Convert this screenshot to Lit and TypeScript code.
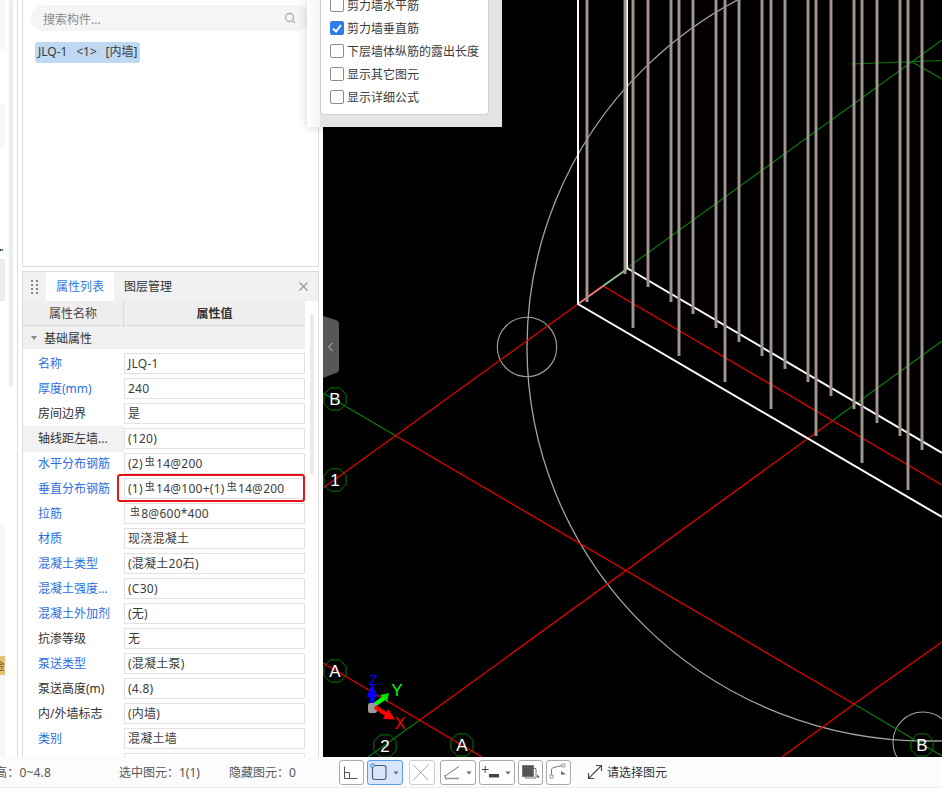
import { LitElement, html, css, svg } from "lit";
import { customElement } from "lit/decorators.js";

const BARS: [number, number][] = [
  [587, 302], [625, 274], [633, 328], [648, 287], [671, 302], [679, 356], [693, 314], [716, 328],
  [725, 382], [739, 342], [762, 356], [771, 409], [785, 369], [808, 382], [816, 436], [831, 396],
  [854, 409], [862, 463], [877, 423], [900, 436], [908, 490], [922, 450],
];

const RED: number[][] = [
  [323, 488, 578, 304],
  [603, 286, 942, 485],
  [396, 436, 854, 704],
  [420, 720, 832, 421],
  [782, 757, 854, 704],
  [854, 704, 942, 642],
  [323, 663, 482, 757],
];
const GREEN: number[][] = [
  [323, 393, 396, 436],
  [854, 704, 942, 756],
  [368, 757, 420, 720],
  [832, 421, 942, 341],
  [627, 268, 942, 40],
  [851, 64, 942, 60.5],
  [912, 62, 942, 79],
];
const AXES: [number, number, string][] = [
  [335, 399, "B"], [335, 480, "1"], [335, 671, "A"], [385, 746, "2"], [462, 745, "A"], [922, 745, "B"],
];

function octagon(cx: number, cy: number, r: number) {
  const p: string[] = [];
  for (let i = 0; i < 8; i++) {
    const a = (Math.PI / 4) * i + Math.PI / 8;
    p.push(`${(cx + r * Math.cos(a)).toFixed(1)},${(cy + r * Math.sin(a)).toFixed(1)}`);
  }
  return p.join(" ");
}

const R = (t: string) => html`<span class="rebar">虫</span>${t}`;

type Row = { label: string; blue?: boolean; value: unknown; shade?: boolean; mark?: boolean };
const ROWS: Row[] = [
  { label: "名称", blue: true, value: "JLQ-1" },
  { label: "厚度(mm)", blue: true, value: "240" },
  { label: "房间边界", value: "是" },
  { label: "轴线距左墙...", value: "(120)", shade: true },
  { label: "水平分布钢筋", blue: true, value: html`(2)${R("14@200")}` },
  { label: "垂直分布钢筋", blue: true, value: html`(1)${R("14@100+(1)")}${R("14@200")}`, mark: true },
  { label: "拉筋", blue: true, value: html`${R("8@600*400")}` },
  { label: "材质", blue: true, value: "现浇混凝土" },
  { label: "混凝土类型", blue: true, value: "(混凝土20石)" },
  { label: "混凝土强度...", blue: true, value: "(C30)" },
  { label: "混凝土外加剂", blue: true, value: "(无)" },
  { label: "抗渗等级", value: "无" },
  { label: "泵送类型", blue: true, value: "(混凝土泵)" },
  { label: "泵送高度(m)", value: "(4.8)" },
  { label: "内/外墙标志", value: "(内墙)" },
  { label: "类别", blue: true, value: "混凝土墙" },
  { label: "", value: "" },
];

const STRIP: { h: number; c: string; badge?: boolean }[] = [
  { h: 49, c: "#f5f6f8" },
  { h: 56, c: "#ffffff" },
  { h: 42, c: "#f6f7f9" },
  { h: 102, c: "#ffffff" },
  { h: 2, c: "linear-gradient(90deg,#333 0 1px,#e8a33c 1px 2px,#3a7bd5 2px 3px,#fff 3px)" },
  { h: 8, c: "#ffffff" },
  { h: 42, c: "#ecedf1" },
  { h: 224, c: "#ffffff" },
  { h: 131, c: "#f5f6f8" },
  { h: 19, c: "#e8c070", badge: true },
  { h: 82, c: "#f5f6f8" },
];

const CHECKS = [
  ["剪力墙水平筋", false],
  ["剪力墙垂直筋", true],
  ["下层墙体纵筋的露出长度", false],
  ["显示其它图元", false],
  ["显示详细公式", false],
] as const;

const caret = svg`<path d="M26.5 11.5h5l-2.500 3z" fill="#666"/>`;

@customElement("app-root")
export class AppRoot extends LitElement {
  static styles = css`
    :host {
      display: block;
      width: 942px;
      height: 788px;
      overflow: hidden;
      font-family: "Noto Sans", "Noto Sans CJK SC", sans-serif;
      font-size: 12px;
      color: #333;
      background: #fff;
    }
    * { box-sizing: border-box; }
    .app { position: relative; display: grid; grid-template-rows: 757px 31px; width: 942px; height: 788px; }
    .main { display: flex; height: 757px; overflow: hidden; }
    .side { display: flex; width: 323px; flex: none; background: #fff; }
    .rail { display: flex; width: 18px; flex: none; border-right: 1px solid #dcdcdc; }
    .strip { display: flex; flex-direction: column; width: 5px; flex: none; overflow: hidden; }
    .strip div { flex: none; overflow: hidden; }
    .badge { font-size: 11px; line-height: 19px; color: #7a5a1c; direction: rtl; white-space: nowrap; }
    .rail-bar { width: 4px; height: 387px; margin-left: 4px; background: #ededed; border-radius: 2px; }
    .panels { display: flex; flex-direction: column; gap: 4px; width: 297px; margin-left: 4px; flex: none; }
    .top { height: 267px; flex: none; border: 1px solid #dcdcdc; border-top: 0; padding: 5px 0 0 8px; }
    .search {
      display: flex; align-items: center; justify-content: space-between;
      width: 278px; height: 26px; border-radius: 13px; background: #f5f5f5;
      padding: 0 10px 0 12px; color: #8a8a8a;
    }
    .search span { line-height: 18px; padding-top: 3px; }
    .search svg { width: 14px; height: 14px; margin-right: 2px; }
    .tag {
      display: inline-block; margin: 11px 0 0 4px; height: 21px; line-height: 20px; padding: 0 3px;
      background: #bfd9f3; border-radius: 3px; color: #3a3a3a; white-space: pre; word-spacing: 1.25px;
    }
    .props { flex: 1; min-height: 0; border: 1px solid #dcdcdc; border-bottom: 0; overflow: hidden; position: relative; }
    .ph { display: flex; align-items: stretch; height: 29px; background: #f0f1f3; line-height: 29px; }
    .grip { width: 23px; flex: none; display: flex; align-items: center; justify-content: center; }
    .tab { width: 68px; text-align: center; background: #fff; color: #2f7de1; }
    .tab.off { background: none; color: #333; }
    .close { margin-left: auto; width: 30px; display: flex; align-items: center; justify-content: center; }
    .body { display: flex; }
    .table { width: 282px; flex: none; }
    .vbar { width: 4px; height: 161px; margin: 13px 0 0 5px; background: #ebebeb; border-radius: 2px; flex: none; }
    .thead { display: grid; grid-template-columns: 101px 181px; height: 25px; background: #eee; border-bottom: 1px solid #dcdcdc; line-height: 26px; text-align: center; }
    .thead div { color: #444; }
    .thead div:first-child { border-right: 1px solid #d8d8d8; }
    .thead b { font-weight: 700; color: #333; }
    .section { display: flex; align-items: center; gap: 7px; height: 23px; margin-bottom: 2px; background: #f0f0f0; padding-left: 8px; }
    .section i { width: 0; height: 0; border-left: 3px solid transparent; border-right: 3px solid transparent; border-top: 4px solid #888; }
    .row { position: relative; display: grid; grid-template-columns: 101px 181px; height: 25px; }
    .label { padding-left: 15px; line-height: 26px; white-space: nowrap; color: #333; }
    .label.blue { color: #2a6fe0; }
    .label.shade { background: #f2f2f2; }
    .value {
      margin-top: 2px; height: 21px; border: 1px solid #e1e1e1; padding-left: 3px;
      line-height: 20px; white-space: pre; color: #3c3c3c; letter-spacing: 0.25px;
    }
    .rebar { font-size: 10px; vertical-align: 3px; margin: 0 1px 0 2px; line-height: 1; }
    .mark {
      position: absolute; left: 94px; top: -2px; width: 188px; height: 28px;
      border: 2px solid #e61414; border-radius: 3px; pointer-events: none;
    }
    .canvas { flex: 1; background: #000; position: relative; overflow: hidden; }
    .canvas svg { display: block; }
    .status {
      display: flex; align-items: center; height: 31px; background: #fcfcfc;
      border-bottom: 1px solid #eee; color: #555; white-space: pre;
    }
    .s1 { width: 124px; flex: none; margin-left: -5px; letter-spacing: 0.2px; }
    .s2 { width: 110px; flex: none; }
    .s3 { width: 110px; flex: none; }
    .tools { display: flex; gap: 3px; margin-left: 0; }
    .tools.g2 { margin-left: 6px; }
    .tools.g3 { margin-left: 5px; }
    .btn { height: 25px; flex: none; border: 1px solid #aaa; border-radius: 3px; background: #fff; padding: 0; }
    .btn svg { display: block; margin: -1px; }
    .btn.sel { background: #d7e6fa; border-color: #5b9bf0; }
    .btn.off { border-color: #ccc; }
    .w25 { width: 25px; } .w26 { width: 26px; } .w36 { width: 36px; }
    .hint { display: flex; align-items: center; gap: 4px; margin-left: 16px; color: #333; }
    .popup {
      position: absolute; left: 307px; top: 0; width: 195px; height: 127px;
      display: flex; flex-direction: column; justify-content: flex-end;
      padding: 0 13px 12px; overflow: hidden;
      background: linear-gradient(90deg, #fff 0, #f4f4f4 13px, #e4e4e4 13px);
      box-shadow: 0 0 10px rgba(0, 0, 0, 0.18);
    }
    .card { background: #fff; border: 1px solid #cfcfcf; border-top: 0; border-radius: 0 0 4px 4px; padding: 0 0 6px 9px; }
    .check { display: flex; align-items: center; gap: 3px; height: 23px; color: #3c3c3c; white-space: nowrap; }
    .box { width: 14px; height: 14px; flex: none; border: 1px solid #8c8c8c; border-radius: 2px; background: #fff; }
    .box.on { border-color: #2b7de9; background: #2b7de9; }
    .box svg { display: block; margin: -1px; }
  `;

  private scene() {
    const ox = 323;
    const f = "Liberation Sans, sans-serif";
    return html`<svg width="619" height="757" viewBox="${ox} 0 619 757" shape-rendering="geometricPrecision">
      <ellipse cx="927" cy="347" rx="400" ry="394" fill="none" stroke="#a3a3a3" stroke-width="1.3"/>
      <circle cx="527" cy="347" r="29.700" fill="none" stroke="#a3a3a3" stroke-width="1.100"/>
      <circle cx="923" cy="742" r="30" fill="none" stroke="#a3a3a3" stroke-width="1.100"/>
      ${GREEN.map((l) => svg`<line x1=${l[0]} y1=${l[1]} x2=${l[2]} y2=${l[3]} stroke="#0a7a0a" stroke-width="1.200"/>`)}
      ${RED.map((l) => svg`<line x1=${l[0]} y1=${l[1]} x2=${l[2]} y2=${l[3]} stroke="#e30000" stroke-width="1.300"/>`)}
      <line x1="578" y1="304" x2="603" y2="286" stroke="#ff7a7a" stroke-width="1.800"/>
      <line x1="603" y1="286" x2="627" y2="269" stroke="#8fc48f" stroke-width="1.800"/>
      <path d="M578 0V304L942 517" fill="none" stroke="#fff" stroke-width="2"/>
      <path d="M627 0V268L942 453" fill="none" stroke="#fff" stroke-width="2"/>
      ${BARS.map(([x, y]) => svg`<rect x=${x - 1.5} y="0" width="3" height=${y} fill="#968984"/><rect x=${x - 0.5} y="0" width="1" height=${y} fill="#ada09a"/>`)}
      ${AXES.map(([x, y, t]) => svg`
        <polygon points=${octagon(x, y, 12)} fill="none" stroke="#0a7a0a" stroke-width="1"/>
        <text x=${x} y=${y + 6} text-anchor="middle" fill="#fff" font-family=${f} font-size="17">${t}</text>`)}
      <path d="M323 316L336 320Q339 321 339 324V370Q339 372 336 373L323 378Z" fill="#565656"/>
      <path d="M332.500 343L328.500 347L332.500 351" fill="none" stroke="#9a9a9a" stroke-width="1.200"/>
      <path d="M372 684L377.500 697H366.500Z" fill="#0000ff"/>
      <rect x="370" y="695" width="4.500" height="9" fill="#0000ff"/>
      <path d="M373 706L384 698" stroke="#00ff00" stroke-width="4.500"/>
      <path d="M389 693L387 702L380 695Z" fill="#00e000"/>
      <rect x="368" y="703" width="9" height="10" rx="2" fill="#9a9a9a"/>
      <path d="M375 707L386 714" stroke="#ff0000" stroke-width="4"/>
      <path d="M395 719.500L383 719L388 709Z" fill="#ff0000"/>
      <text x="373" y="685" text-anchor="middle" fill="#0000ff" font-family=${f} font-size="15">Z</text>
      <text x="397" y="696" text-anchor="middle" fill="#00ff00" font-family=${f} font-size="17">Y</text>
      <text x="400" y="729" text-anchor="middle" fill="#ff0000" font-family=${f} font-size="16">X</text>
    </svg>`;
  }

  private tools() {
    const s = (w: number, c: unknown) =>
      html`<svg width=${w} height="25" viewBox="0 0 ${w} 25">${c}</svg>`;
    return html`
      <div class="tools">
        <div class="btn w25">${s(25, svg`<path d="M5.500 6.500V18.500H18.500M5.500 12.500H10.500V18.500" fill="none" stroke="#555" stroke-width="1"/>`)}</div>
        <div class="btn w36 sel">${s(36, svg`<rect x="5.500" y="5.500" width="13.500" height="14" rx="2.500" fill="none" stroke="#556" stroke-width="1.100"/><circle cx="5.500" cy="5.500" r="1.800" fill="#d7e6fa" stroke="#2b7de9" stroke-width="1"/>${caret}`)}</div>
      </div>
      <div class="tools g2">
        <div class="btn w26 off">${s(26, svg`<path d="M4 4.500L19.500 20.500M19.500 4.500L4 20.500" stroke="#a8a8a8" stroke-width="1"/>`)}</div>
      </div>
      <div class="tools g3">
        <div class="btn w36">${s(36, svg`<path d="M5 16L19 6.500" stroke="#777" stroke-width="1"/><path d="M5 15V18" stroke="#777"/><path d="M5 18.500H19" stroke="#999" stroke-width="1.600"/>${caret}`)}</div>
        <div class="btn w36">${s(36, svg`<path d="M3 9.500H9.500M6.200 6V13" stroke="#444" stroke-width="1"/><rect x="10" y="14" width="10" height="3.500" fill="#444"/>${caret}`)}</div>
        <div class="btn w25">${s(25, svg`<rect x="4.500" y="5.500" width="11" height="11" fill="#555" stroke="#777"/><path d="M15.500 8.500H18V18H7.500V16.500" fill="none" stroke="#777"/><path d="M19 14.500L22 17.500H19Z" fill="#555"/>`)}</div>
        <div class="btn w25">${s(25, svg`<path d="M5.500 15V9.500Q5.500 8 8 7.500L16 5.500" fill="none" stroke="#777"/><rect x="4" y="15" width="3" height="3" fill="#fff" stroke="#888" stroke-width=".8"/><rect x="16" y="4" width="3" height="3" fill="#fff" stroke="#888" stroke-width=".8"/><path d="M15 11L20 14.500H15Z" fill="#666"/>`)}</div>
      </div>
      <div class="hint">
        <svg width="16" height="16" viewBox="0 0 16 16"><path d="M1.500 14.500L14.500 1.500M9 1.500H14.500V7M1.500 9V14.500H7" fill="none" stroke="#444" stroke-width="1.100"/></svg>
        <span>请选择图元</span>
      </div>`;
  }

  render() {
    return html`<div class="app">
      <div class="main">
        <aside class="side">
          <div class="rail">
            <div class="strip">
              ${STRIP.map((b) => html`<div style="height:${b.h}px;background:${b.c}" class=${b.badge ? "badge" : ""}>${b.badge ? "金" : ""}</div>`)}
            </div>
            <div class="rail-bar"></div>
          </div>
          <div class="panels">
            <section class="top">
              <div class="search">
                <span>搜索构件...</span>
                <svg viewBox="0 0 14 14"><circle cx="6.500" cy="6.500" r="4" fill="none" stroke="#adadad" stroke-width="1.300"/><path d="M9.500 9.500L12 12" stroke="#adadad" stroke-width="1.300"/></svg>
              </div>
              <span class="tag">JLQ-1  &lt;1&gt;  [内墙]</span>
            </section>
            <section class="props">
              <div class="ph">
                <div class="grip">
                  <svg width="7" height="14" viewBox="0 0 7 14" fill="#888">
                    <rect x="0" y="0" width="2" height="2"/><rect x="5" y="0" width="2" height="2"/>
                    <rect x="0" y="4" width="2" height="2"/><rect x="5" y="4" width="2" height="2"/>
                    <rect x="0" y="8" width="2" height="2"/><rect x="5" y="8" width="2" height="2"/>
                    <rect x="0" y="12" width="2" height="2"/><rect x="5" y="12" width="2" height="2"/>
                  </svg>
                </div>
                <div class="tab">属性列表</div>
                <div class="tab off">图层管理</div>
                <div class="close">
                  <svg width="11" height="11" viewBox="0 0 11 11"><path d="M1.500 1.500L9.500 9.500M9.500 1.500L1.500 9.500" stroke="#999" stroke-width="1.200"/></svg>
                </div>
              </div>
              <div class="body">
                <div class="table">
                  <div class="thead"><div>属性名称</div><div><b>属性值</b></div></div>
                  <div class="section"><i></i><span>基础属性</span></div>
                  ${ROWS.map(
                    (r) => html`<div class="row">
                      <div class="label ${r.blue ? "blue" : ""} ${r.shade ? "shade" : ""}">${r.label}</div>
                      <div class="value">${r.value}</div>
                      ${r.mark ? html`<div class="mark"></div>` : ""}
                    </div>`
                  )}
                </div>
                <div class="vbar"></div>
              </div>
            </section>
          </div>
        </aside>
        <div class="canvas">${this.scene()}</div>
      </div>
      <footer class="status">
        <span class="s1">高：0~4.8</span>
        <span class="s2">选中图元：1(1)</span>
        <span class="s3">隐藏图元：0</span>
        ${this.tools()}
      </footer>
      <div class="popup">
        <div class="card">
          ${CHECKS.map(
            ([t, on]) => html`<div class="check">
              <span class="box ${on ? "on" : ""}">
                ${on ? html`<svg width="14" height="14" viewBox="0 0 14 14"><path d="M3 7.500L6 10.500L11 4" fill="none" stroke="#fff" stroke-width="2"/></svg>` : ""}
              </span>
              <span>${t}</span>
            </div>`
          )}
        </div>
      </div>
    </div>`;
  }
}
